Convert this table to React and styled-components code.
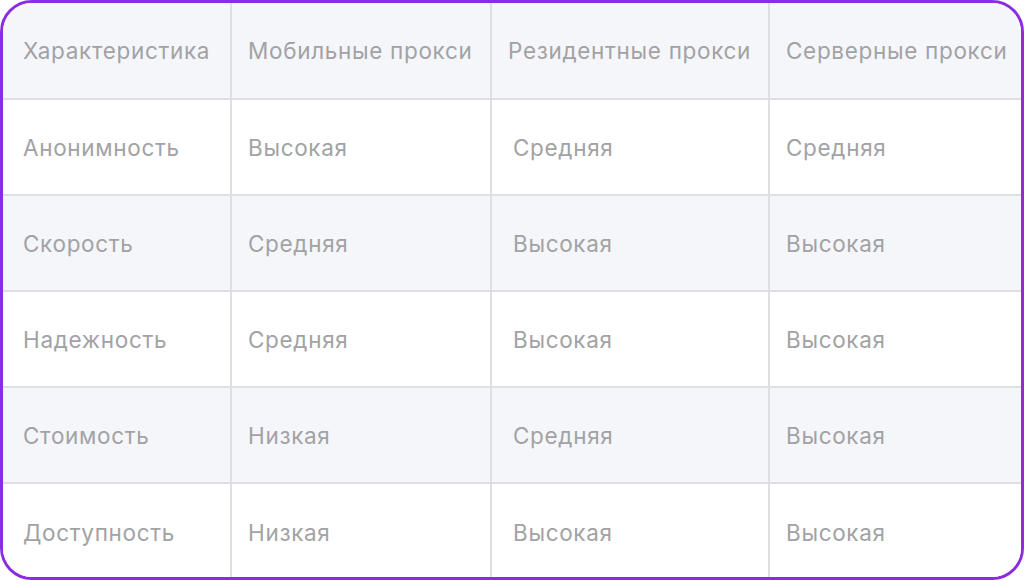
import React from 'react';
import styled, { createGlobalStyle } from 'styled-components';

const GlobalStyle = createGlobalStyle`
  html, body {
    margin: 0;
    padding: 0;
    background: #ffffff;
  }
  * {
    box-sizing: border-box;
  }
`;

const Frame = styled.div`
  width: 1024px;
  height: 580px;
  border: 3px solid #8b2ce0;
  border-radius: 32px;
  overflow: hidden;
  background: #ffffff;
  display: grid;
  grid-template-columns: 229px 260px 278px 1fr;
  grid-template-rows: 97px repeat(5, 96px) 1fr;
  font-family: Inter, "Noto Sans", sans-serif;
`;

const Cell = styled.div`
  display: flex;
  align-items: center;
  padding-left: ${p => p.$pad}px;
  background: ${p => (p.$shade ? '#f5f6fa' : '#ffffff')};
  border-right: ${p => (p.$last ? 'none' : '2px solid #dedfe3')};
  border-bottom: ${p => (p.$bottom ? 'none' : '2px solid #dedfe3')};
  color: #a2a2a5;
  font-size: 22.5px;
  letter-spacing: 0.68px;
  white-space: nowrap;
`;

const head = ['Характеристика', 'Мобильные прокси', 'Резидентные прокси', 'Серверные прокси'];

const rows = [
  ['Анонимность', 'Высокая', 'Средняя', 'Средняя'],
  ['Скорость', 'Средняя', 'Высокая', 'Высокая'],
  ['Надежность', 'Средняя', 'Высокая', 'Высокая'],
  ['Стоимость', 'Низкая', 'Средняя', 'Высокая'],
  ['Доступность', 'Низкая', 'Высокая', 'Высокая'],
];

const headPad = [20, 16, 16, 16];
const bodyPad = [20, 16, 21, 16];

export default function App() {
  return (
    <>
      <GlobalStyle />
      <Frame>
        {head.map((h, i) => (
          <Cell key={h} $pad={headPad[i]} $shade $last={i === 3}>
            {h}
          </Cell>
        ))}
        {rows.map((r, ri) =>
          r.map((c, ci) => (
            <Cell
              key={ri + '-' + ci}
              $pad={bodyPad[ci]}
              $shade={ri % 2 === 1}
              $last={ci === 3}
              $bottom={ri === rows.length - 1}
            >
              {c}
            </Cell>
          ))
        )}
      </Frame>
    </>
  );
}
